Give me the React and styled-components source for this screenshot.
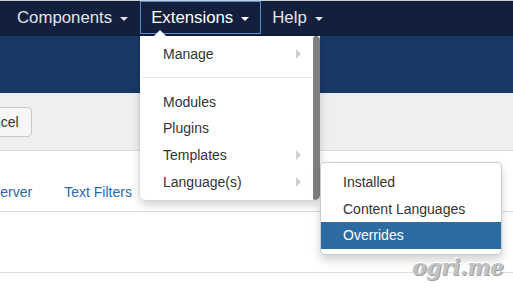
import React from 'react';
import styled, { createGlobalStyle } from 'styled-components';

const GlobalStyle = createGlobalStyle`
  html, body {
    margin: 0;
    padding: 0;
    background: #fff;
    overflow: hidden;
  }
  body {
    font-family: "Liberation Sans", Arial, sans-serif;
    width: 513px;
    height: 288px;
  }
`;

const Page = styled.div`
  position: relative;
  width: 513px;
  height: 288px;
  overflow: hidden;
  background: #fff;
`;

const NavBar = styled.div`
  display: flex;
  align-items: stretch;
  height: 34px;
  padding-left: 6px;
  background: #12203d;
  border-top: 1px solid #c9ccd2;
`;

const NavItem = styled.div`
  display: flex;
  align-items: center;
  gap: 8px;
  padding: 0 12px 0 11px;
  font-size: 16.8px;
  color: ${(p) => (p.$open ? '#ffffff' : '#e2e4e8')};
  box-shadow: ${(p) => (p.$open ? 'inset 0 0 0 1px #5a8fcb' : 'none')};
  margin-bottom: 1px;
`;

const Caret = styled.span`
  width: 0;
  height: 0;
  border-left: 4px solid transparent;
  border-right: 4px solid transparent;
  border-top: 4px solid currentColor;
  margin-top: 2px;
`;

const HeaderBand = styled.div`
  height: 57px;
  background: #1a3866;
  border-top: 1px solid #0f1c36;
`;

const Toolbar = styled.div`
  display: flex;
  align-items: center;
  height: 57px;
  background: #efefef;
  border-bottom: 1px solid #dcdcdc;
`;

const ToolButton = styled.div`
  margin-left: -38px;
  margin-top: 1px;
  height: 28px;
  padding: 0 12px;
  display: flex;
  align-items: center;
  font-size: 14px;
  color: #333;
  background: #f6f6f6;
  border: 1px solid #c8c8c8;
  border-radius: 4px;
`;

const Tabs = styled.div`
  display: flex;
  align-items: center;
  height: 60px;
  margin-left: -25px;
  border-bottom: 1px solid #dedede;
`;

const Tab = styled.a`
  padding: 0 16px;
  font-size: 14px;
  color: #2a69a8;
  text-decoration: none;
  margin-top: 21px;
`;

const Content = styled.div`
  height: 60px;
  border-bottom: 1px solid #dedede;
`;

const Menu = styled.div`
  position: absolute;
  left: 140px;
  top: 36px;
  width: 180px;
  padding: 5px 0;
  background: #fff;
  border-radius: 0 0 5px 5px;
  box-shadow: 0 5px 10px rgba(0, 0, 0, 0.18), -1px 0 2px rgba(0, 0, 0, 0.08);
  box-sizing: border-box;

  &::before {
    content: '';
    position: absolute;
    left: 14px;
    top: -6px;
    border-left: 6px solid transparent;
    border-right: 6px solid transparent;
    border-bottom: 6px solid #fff;
  }
`;

const MenuScroll = styled.div`
  position: absolute;
  right: 0;
  top: 0;
  bottom: 0;
  width: 7px;
  background: #7f7f7f;
  border-radius: 3px 4px 5px 2px;
`;

const MenuItem = styled.div`
  position: relative;
  display: flex;
  align-items: center;
  height: 26.7px;
  padding-left: 23px;
  padding-right: 19px;
  font-size: 14px;
  color: ${(p) => (p.$active ? '#fff' : '#333')};
  background: ${(p) => (p.$active ? '#2d6ca2' : 'transparent')};
`;

const SubArrow = styled.span`
  margin-left: auto;
  width: 0;
  height: 0;
  border-top: 5px solid transparent;
  border-bottom: 5px solid transparent;
  border-left: 5px solid #cfcfcf;
`;

const Divider = styled.div`
  height: 1px;
  margin: 9.5px 8px 10px 2px;
  background: #e5e5e5;
`;

const SubMenu = styled.div`
  position: absolute;
  left: 320px;
  top: 162px;
  width: 182px;
  padding: 5.5px 0;
  background: #fff;
  border: 1px solid rgba(0, 0, 0, 0.2);
  border-radius: 5px;
  box-shadow: 0 5px 10px rgba(0, 0, 0, 0.18);
  box-sizing: border-box;

  ${MenuItem} {
    padding-left: 22px;
  }
`;

const Watermark = styled.div`
  position: absolute;
  left: 412px;
  top: 254px;
  font-family: "DejaVu Serif", serif;
  font-weight: bold;
  font-style: italic;
  font-size: 22px;
  letter-spacing: -0.5px;
  color: #c2c2c2;
  text-shadow: 1px 1px 0 #a0a0a0, -1px -1px 0 #fff;
`;

export default function App() {
  return (
    <Page>
      <GlobalStyle />
      <NavBar>
        <NavItem>
          Components <Caret />
        </NavItem>
        <NavItem $open>
          Extensions <Caret />
        </NavItem>
        <NavItem>
          Help <Caret />
        </NavItem>
      </NavBar>
      <HeaderBand />
      <Toolbar>
        <ToolButton>Cancel</ToolButton>
      </Toolbar>
      <Tabs>
        <Tab>Server</Tab>
        <Tab>Text Filters</Tab>
      </Tabs>
      <Content />

      <Menu>
        <MenuItem>
          Manage <SubArrow />
        </MenuItem>
        <Divider />
        <MenuItem>Modules</MenuItem>
        <MenuItem>Plugins</MenuItem>
        <MenuItem>
          Templates <SubArrow />
        </MenuItem>
        <MenuItem>
          Language(s) <SubArrow />
        </MenuItem>
        <MenuScroll />
      </Menu>

      <SubMenu>
        <MenuItem>Installed</MenuItem>
        <MenuItem>Content Languages</MenuItem>
        <MenuItem $active>Overrides</MenuItem>
      </SubMenu>

      <Watermark>ogri.me</Watermark>
    </Page>
  );
}
